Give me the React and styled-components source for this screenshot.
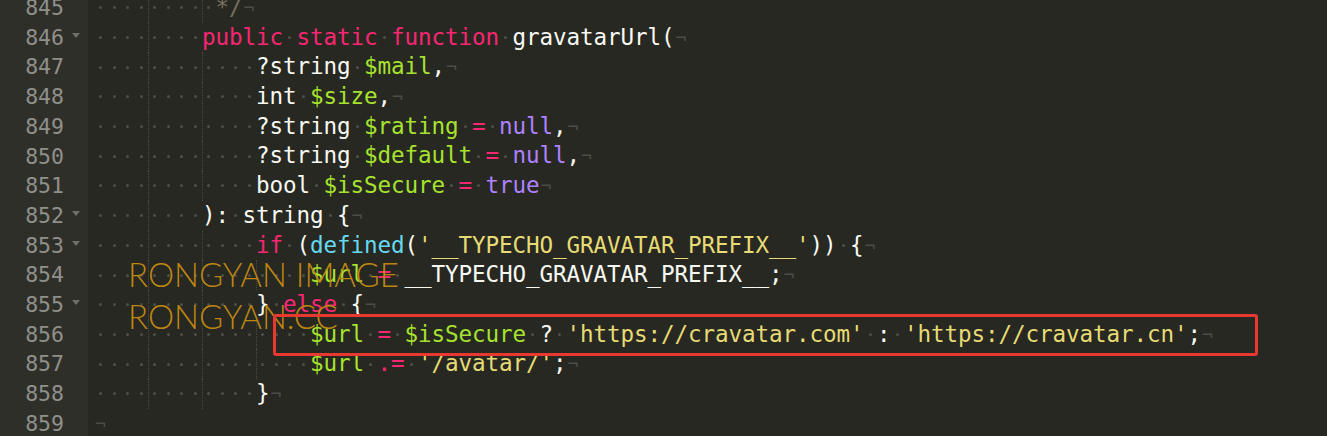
import React from 'react';
import styled, { createGlobalStyle } from 'styled-components';

const LINE_H = 29.7;
const CH = 13.5;

const GlobalStyle = createGlobalStyle`
    html, body {
        margin:0;
        padding:0;
        background:#272822;
        overflow:hidden;
    }
`

// colours of the theme
const colors = {
    plain: '#f8f8f2',
    kw: '#f92672',
    v: '#a6e22e',
    c: '#ae81ff',
    s: '#e6db74',
    fn: '#66d9ef',
    cm: '#75715e',
};

const sp = [' ', 'plain'];

const lines = [
    { n: 845, toks: [['         ', 'plain'], ['*/', 'cm']] },
    { n: 846, fold: true, toks: [['        ', 'plain'], ['public', 'kw'], sp, ['static', 'kw'], sp, ['function', 'kw'], sp, ['gravatarUrl(', 'plain']] },
    { n: 847, toks: [['            ?string', 'plain'], sp, ['$mail', 'v'], [',', 'plain']] },
    { n: 848, toks: [['            int', 'plain'], sp, ['$size', 'v'], [',', 'plain']] },
    { n: 849, toks: [['            ?string', 'plain'], sp, ['$rating', 'v'], sp, ['=', 'kw'], sp, ['null', 'c'], [',', 'plain']] },
    { n: 850, toks: [['            ?string', 'plain'], sp, ['$default', 'v'], sp, ['=', 'kw'], sp, ['null', 'c'], [',', 'plain']] },
    { n: 851, toks: [['            bool', 'plain'], sp, ['$isSecure', 'v'], sp, ['=', 'kw'], sp, ['true', 'c']] },
    { n: 852, fold: true, toks: [['        ): string {', 'plain']] },
    { n: 853, fold: true, toks: [['            ', 'plain'], ['if', 'kw'], [' (', 'plain'], ['defined', 'fn'], ['(', 'plain'], ["'__TYPECHO_GRAVATAR_PREFIX__'", 's'], [')) {', 'plain']] },
    { n: 854, toks: [['                ', 'plain'], ['$url', 'v'], sp, ['=', 'kw'], [' __TYPECHO_GRAVATAR_PREFIX__;', 'plain']] },
    { n: 855, fold: true, toks: [['            }', 'plain'], sp, ['else', 'kw'], [' {', 'plain']] },
    { n: 856, toks: [['                ', 'plain'], ['$url', 'v'], sp, ['=', 'kw'], sp, ['$isSecure', 'v'], [' ? ', 'plain'], ["'https://cravatar.com'", 's'], [' : ', 'plain'], ["'https://cravatar.cn'", 's'], [';', 'plain']] },
    { n: 857, toks: [['                ', 'plain'], ['$url', 'v'], sp, ['.=', 'kw'], sp, ["'/avatar/'", 's'], [';', 'plain']] },
    { n: 858, toks: [['            }', 'plain']] },
    { n: 859, toks: [] },
];

// every character gets its own cell so the grid stays exact
const renderLine = (toks) => {
    const out = [];
    let col = 0;
    let leading = true;
    toks.forEach(([text, kind], ti) => {
        [...text].forEach((ch, ci) => {
            const key = `${ti}-${ci}`;
            if (ch === ' ') {
                out.push(<Space key={key} $guide={leading && col > 0 && col % 4 === 0} />);
            } else {
                leading = false;
                out.push(<Char key={key} $kind={kind}>{ch}</Char>);
            }
            col++;
        });
    });
    return out;
};

const App = () => {
    return (
        <>
            <GlobalStyle />
            <Editor>
                {lines.map((line) => (
                    <Row key={line.n}>
                        <Gutter>
                            <LineNo>{line.n}</LineNo>
                            <FoldSlot>{line.fold && <FoldArrow />}</FoldSlot>
                        </Gutter>
                        <Code>
                            {renderLine(line.toks)}
                            <Eol>¬</Eol>
                        </Code>
                    </Row>
                ))}
                <Watermark>
                    <span>RONGYAN IMAGE</span>
                    <span>RONGYAN.CC</span>
                </Watermark>
                <Highlight />
            </Editor>
        </>
    );
};

export default App;

const Editor = styled.div`
    position:relative;
    width:1327px;
    height:436px;
    overflow:hidden;
    background:#272822;
    display:flex;
    flex-direction:column;
    & > div:first-child {
        margin-top:-7px;
    }
    font-family:"DejaVu Sans Mono", monospace;
`

const Row = styled.div`
    display:flex;
    height:${LINE_H}px;
    flex-shrink:0;
`

const Gutter = styled.div`
    width:88px;
    flex-shrink:0;
    background:#2f2f2a;
    display:flex;
    align-items:center;
    justify-content:flex-end;
`

const LineNo = styled.span`
    font-size:21.5px;
    color:#8f908a;
    line-height:1;
`

const FoldSlot = styled.div`
    width:24px;
    height:100%;
    display:flex;
    align-items:center;
    justify-content:center;
`

const FoldArrow = styled.div`
    width:0;
    height:0;
    border-left:4px solid transparent;
    border-right:4px solid transparent;
    border-top:5px solid #6f706a;
    margin-top:-4px;
`

const Code = styled.div`
    display:flex;
    align-items:stretch;
    padding-left:6px;
    font-size:22.6px;
    line-height:${LINE_H}px;
    white-space:pre;
`

const Char = styled.span`
    width:${CH}px;
    flex-shrink:0;
    display:flex;
    justify-content:center;
    color:${(p) => colors[p.$kind]};
`

const Space = styled.span`
    display:flex;
    flex-shrink:0;
    width:${CH}px;
    align-items:center;
    justify-content:center;
    box-sizing:border-box;
    border-left:${(p) => (p.$guide ? '1px dotted #4b4b45' : 'none')};
    &::after {
        content:'';
        width:3px;
        height:3px;
        margin-left:${(p) => (p.$guide ? '-1px' : '0')};
        border-radius:50%;
        background:#4f4f49;
    }
`

const Eol = styled.span`
    color:#4d4d47;
    font-size:18px;
    margin-left:1px;
`

const Watermark = styled.div`
    position:absolute;
    left:128px;
    top:252.5px;
    display:flex;
    flex-direction:column;
    font-family:Lato, "Open Sans", sans-serif;
    font-weight:300;
    font-size:33px;
    line-height:42.5px;
    color:#bd8612;
    pointer-events:none;
`

const Highlight = styled.div`
    position:absolute;
    left:273px;
    top:314px;
    width:985px;
    height:42px;
    box-sizing:border-box;
    border:3px solid #e8382f;
    border-radius:3px;
`
